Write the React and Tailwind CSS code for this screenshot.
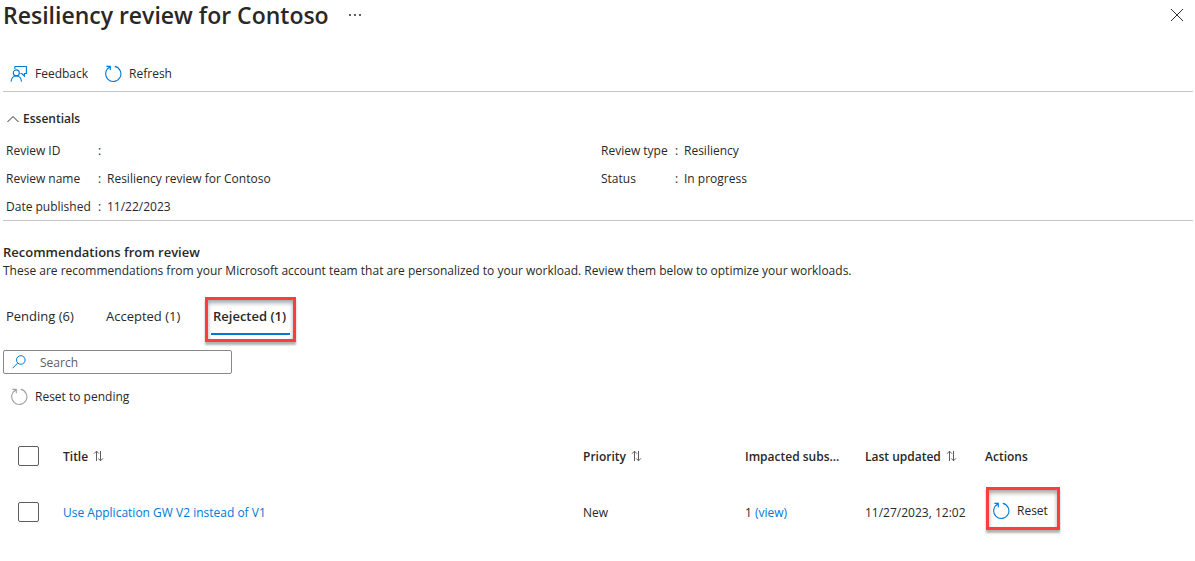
import React from "react";

function ResetIcon({ className }) {
  return (
    <svg className={className} width="18" height="18" viewBox="0 0 18 18" fill="none" stroke="currentColor" strokeWidth="1.1" aria-hidden="true">
      <path d="M10.8 1.4A7.6 7.6 0 1 1 6 2" />
      <path d="M2.4 1.4H6.3V5.3" />
    </svg>
  );
}

function FeedbackIcon() {
  return (
    <svg className="text-[#0078d4]" width="18" height="18" viewBox="0 0 18 18" fill="none" stroke="currentColor" strokeWidth="1.1" aria-hidden="true">
      <path d="M4.9 4V1.5H16.4V8.5H14.4V11.2L11.8 8.5H10.4" />
      <circle cx="6.3" cy="7.9" r="3" />
      <path d="M1.1 16.6C1.4 13.2 3.4 11 6.3 11S11.2 13.2 11.5 16.6" />
    </svg>
  );
}

function SortIcon() {
  return (
    <svg className="text-[#605e5c]" width="11" height="12" viewBox="0 0 11 12" fill="none" stroke="currentColor" strokeWidth="1" aria-hidden="true">
      <path d="M3.5 11V1.2M1 3.7L3.5 1.2L6 3.7" />
      <path d="M7.5 1V10.8M5.3 8.5L7.5 10.8L10 8.3" />
    </svg>
  );
}

function Field({ label, value, labelClass }) {
  return (
    <div className="flex h-7 items-center">
      <dt className={labelClass}>{label}</dt>
      <dd className="flex">
        <span className="w-[9px]">:</span>
        {value}
      </dd>
    </div>
  );
}

const callout =
  "border-[3px] border-[#f93e3e] shadow-[0_3px_2px_rgba(0,0,0,0.3),inset_0_3px_4px_rgba(0,0,0,0.35)]";

const box =
  "block h-5 w-[21px] appearance-none rounded-xs border border-[#605e5c] bg-white checked:bg-[#0078d4]";

function Header({ children, sortable }) {
  return (
    <th scope="col" className="p-0 text-left font-semibold whitespace-nowrap">
      {sortable ? (
        <button type="button" className="flex items-center gap-[5px]">
          {children}
          <SortIcon />
        </button>
      ) : (
        children
      )}
    </th>
  );
}

export default function App() {
  return (
    <main className="min-h-screen bg-white pr-[2px] pl-[3px] font-['Open_Sans',sans-serif] text-xs leading-[19px] text-[#292827]">
      <header className="flex h-[30px] items-center">
        <h1 className="text-[23px] leading-[29px] font-semibold">Resiliency review for Contoso</h1>
        <button type="button" aria-label="More actions" className="ml-[18px] p-0.5 text-[#605e5c]">
          <svg width="12" height="4" viewBox="0 0 12 4" fill="currentColor" aria-hidden="true">
            <rect x="0" y="1" width="2" height="2" />
            <rect x="5" y="1" width="2" height="2" />
            <rect x="10" y="1" width="2" height="2" />
          </svg>
        </button>
        <button type="button" aria-label="Close" className="mr-[9px] ml-auto text-[#323130]">
          <svg width="14" height="14" viewBox="0 0 14 14" fill="none" stroke="currentColor" strokeWidth="1" aria-hidden="true">
            <path d="M1 1L13 13M13 1L1 13" />
          </svg>
        </button>
      </header>

      <div className="mt-[26px] flex h-9 items-center gap-4 border-b border-[#c8c6c4] pl-[7px]">
        <button type="button" className="flex items-center gap-[7px]">
          <FeedbackIcon />
          Feedback
        </button>
        <button type="button" className="flex items-center gap-[7px]">
          <ResetIcon className="text-[#0078d4]" />
          Refresh
        </button>
      </div>

      <section className="border-b border-[#c8c6c4] pt-[17px]">
        <button type="button" className="ml-1 flex items-center gap-1 font-semibold">
          <svg width="12" height="8" viewBox="0 0 12 8" fill="none" stroke="currentColor" strokeWidth="1" aria-hidden="true">
            <path d="M0.5 7L6 1.5L11.5 7" />
          </svg>
          Essentials
        </button>
        <dl className="grid grid-cols-2 gap-x-[3px] pt-2 pl-[3px]">
          <div>
            <Field label="Review ID" value="" labelClass="w-[92px]" />
            <Field label="Review name" value="Resiliency review for Contoso" labelClass="w-[92px]" />
            <Field label="Date published" value="11/22/2023" labelClass="w-[92px]" />
          </div>
          <div>
            <Field label="Review type" value="Resiliency" labelClass="w-[74px]" />
            <Field label="Status" value="In progress" labelClass="w-[74px]" />
          </div>
        </dl>
      </section>

      <section className="pt-[22px]">
        <h2 className="text-[13px] leading-[18px] font-semibold">Recommendations from review</h2>
        <p>
          These are recommendations from your Microsoft account team that are personalized to your
          workload. Review them below to optimize your workloads.
        </p>

        <div role="tablist" className="mt-[17px] flex h-[46px] items-start text-[13px] leading-[18px]">
          <button type="button" role="tab" aria-selected="false" className="mt-[10px] w-[100px] pl-[3px] text-left">
            Pending (6)
          </button>
          <button type="button" role="tab" aria-selected="false" className="mt-[10px] w-[102px] pl-[3px] text-left">
            Accepted (1)
          </button>
          <button type="button" role="tab" aria-selected="true" className={`h-[45px] w-[91px] px-[3px] pb-1 text-left font-semibold ${callout}`}>
            <span className="flex h-[35px] items-center border-b-2 border-[#0078d4] px-[2px] pb-0.5">Rejected (1)</span>
          </button>
        </div>

        <label className="mt-[7px] flex h-6 w-[229px] items-center gap-[14px] rounded-xs border border-[#8a8886] px-2">
          <svg className="shrink-0 text-[#0078d4]" width="14" height="14" viewBox="0 0 14 14" fill="none" stroke="currentColor" strokeWidth="1" aria-hidden="true">
            <circle cx="8.8" cy="5" r="4.3" />
            <path d="M5.7 8.1L0.5 13.3" />
          </svg>
          <input type="text" aria-label="Search" placeholder="Search" className="w-full min-w-0 outline-none placeholder:text-[#605e5c]" />
        </label>

        <button type="button" className="mt-[13px] ml-[7px] flex items-center gap-[7px]">
          <ResetIcon className="text-[#a19f9d]" />
          Reset to pending
        </button>
      </section>

      <table className="mt-[22px] w-full table-fixed border-collapse">
        <colgroup>
          <col className="w-[60px]" />
          <col />
          <col className="w-[162px]" />
          <col className="w-[120px]" />
          <col className="w-[120px]" />
          <col className="w-[208px]" />
        </colgroup>
        <thead>
          <tr className="h-14">
            <th scope="col" className="p-0 pl-[15px]">
              <input type="checkbox" aria-label="Select all" className={box} />
            </th>
            <Header sortable>Title</Header>
            <Header sortable>Priority</Header>
            <Header>Impacted subs...</Header>
            <Header sortable>Last updated</Header>
            <Header>Actions</Header>
          </tr>
        </thead>
        <tbody>
          <tr className="h-14">
            <td className="p-0 pl-[15px]">
              <input type="checkbox" aria-label="Select Use Application GW V2 instead of V1" className={box} />
            </td>
            <td className="p-0">
              <a href="#recommendation" className="text-[#0078d4]">Use Application GW V2 instead of V1</a>
            </td>
            <td className="p-0">New</td>
            <td className="p-0">
              1 <a href="#view" className="text-[#0078d4]">(view)</a>
            </td>
            <td className="p-0 whitespace-nowrap">11/27/2023, 12:02</td>
            <td className="p-0 pb-[7px] pl-px">
              <button type="button" className={`flex h-[43px] items-center gap-[7px] pt-1 pr-[9px] pl-[3px] ${callout}`}>
                <ResetIcon className="text-[#0078d4]" />
                Reset
              </button>
            </td>
          </tr>
        </tbody>
      </table>
    </main>
  );
}
